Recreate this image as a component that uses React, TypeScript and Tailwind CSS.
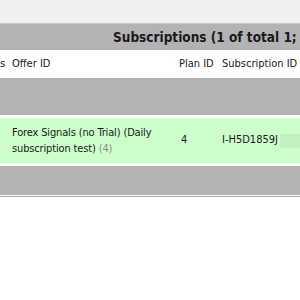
const ROW_GRAY = 'bg-[#b3b3b3]';

const App = () => {
  return (
    <div
      className="w-[300px] h-[300px] overflow-hidden bg-white text-[#1a1a1a]"
      style={{ fontFamily: '"DejaVu Sans Condensed", "DejaVu Sans", sans-serif' }}
    >
      {/* top page area */}
      <div className="h-[23px] bg-[#f0f0f0]" />
      <div className="h-px bg-[#c9c9c9]" />

      {/* title bar */}
      <div className={`h-[26px] ${ROW_GRAY} flex items-center pl-[113px] whitespace-nowrap`}>
        <span className="text-[13.5px] font-bold">Subscriptions (1 of total 1;</span>
      </div>

      {/* column headers */}
      <div className="h-[28px] bg-white flex items-center text-[11px] whitespace-nowrap">
        <div className="w-[12px] shrink-0">s</div>
        <div className="w-[167px] shrink-0">Offer ID</div>
        <div className="w-[43px] shrink-0">Plan ID</div>
        <div className="shrink-0">Subscription ID</div>
      </div>

      {/* filter row */}
      <div className={`h-[37px] ${ROW_GRAY}`} />
      <div className="h-[3px] bg-white" />

      {/* subscription row */}
      <div className="h-[45px] bg-[#ccffcc] flex items-center text-[11px]">
        <div className="w-[12px] shrink-0" />
        <div className="w-[167px] shrink-0 leading-[16px] tracking-[-0.15px] pt-[1px] whitespace-nowrap">
          <div>Forex Signals (no Trial) (Daily</div>
          <div>
            subscription test) <span className="text-[#8a8a8a]">(4)</span>
          </div>
        </div>
        <div className="w-[43px] shrink-0 pl-[2px]">4</div>
        <div className="flex items-center whitespace-nowrap shrink-0">
          <span>I-H5D1859J</span>
          <span className="ml-[2px] w-[40px] h-[14px] bg-[#c3f0c3]" />
        </div>
      </div>
      <div className="h-[3px] bg-white" />

      {/* footer row */}
      <div className={`h-[29px] ${ROW_GRAY}`} />
      <div className="h-px bg-white" />
      <div className="h-px bg-[#a8a8a8]" />
    </div>
  );
};

export default App;
